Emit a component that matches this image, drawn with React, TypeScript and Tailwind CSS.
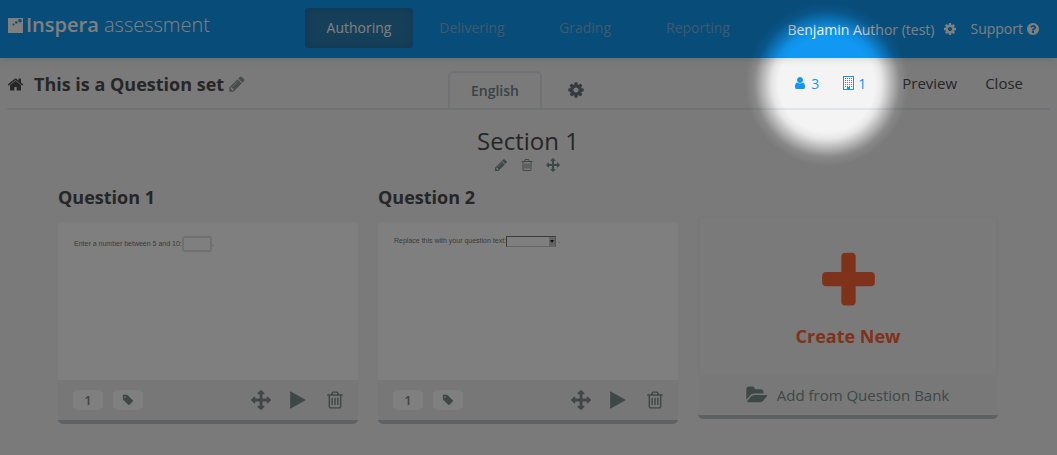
import type { ReactNode } from "react";

const paths = {
  plus: "M1600 736v192q0 40-28 68t-68 28h-416v416q0 40-28 68t-68 28h-192q-40 0-68-28t-28-68v-416h-416q-40 0-68-28t-28-68v-192q0-40 28-68t68-28h416v-416q0-40 28-68t68-28h192q40 0 68 28t28 68v416h416q40 0 68 28t28 68z",
  user: "M1536 1399q0 109-62.5 187t-150.5 78h-854q-88 0-150.5-78t-62.5-187q0-85 8.5-160.5t31.5-152 58.5-131 94-89 134.5-34.5q131 128 313 128t313-128q76 0 134.5 34.5t94 89 58.5 131 31.5 152 8.5 160.5zm-256-887q0 159-112.5 271.5t-271.5 112.5-271.5-112.5-112.5-271.5 112.5-271.5 271.5-112.5 271.5 112.5 112.5 271.5z",
  cog: "M1152 896q0-106-75-181t-181-75-181 75-75 181 75 181 181 75 181-75 75-181zm512-109v222q0 12-8 23t-20 13l-185 28q-19 54-39 91 35 50 107 138 10 12 10 25t-9 23q-27 37-99 108t-94 71q-12 0-26-9l-138-108q-44 23-91 38-16 136-29 186-7 28-36 28h-222q-14 0-24.5-8.5t-11.5-21.5l-28-184q-49-16-90-37l-141 107q-10 9-25 9-14 0-25-11-126-114-165-168-7-10-7-23 0-12 8-23 15-21 51-66.5t54-70.5q-27-50-41-99l-183-27q-13-2-21-12.5t-8-23.5v-222q0-12 8-23t19-13l186-28q14-46 39-92-40-57-107-138-10-12-10-24 0-10 9-23 26-36 98.5-107.5t94.5-71.5q13 0 26 10l138 107q44-23 91-38 16-136 29-186 7-28 36-28h222q14 0 24.5 8.5t11.5 21.5l28 184q49 16 90 37l142-107q9-9 24-9 13 0 25 10 129 119 165 170 7 8 7 22 0 12-8 23-15 21-51 66.5t-54 70.5q26 50 41 98l183 28q13 2 21 12.5t8 23.5z",
  pencil: "M491 1536l91-91-235-235-91 91v107h128v128h107zm523-928q0-22-22-22-10 0-17 7l-542 542q-7 7-7 17 0 22 22 22 10 0 17-7l542-542q7-7 7-17zm-54-192l416 416-832 832h-416v-416zm683 96q0 53-37 90l-166 166-416-416 166-165q36-38 90-38 53 0 91 38l235 234q37 39 37 91z",
  trash: "M704 736v576q0 14-9 23t-23 9h-64q-14 0-23-9t-9-23v-576q0-14 9-23t23-9h64q14 0 23 9t9 23zm256 0v576q0 14-9 23t-23 9h-64q-14 0-23-9t-9-23v-576q0-14 9-23t23-9h64q14 0 23 9t9 23zm256 0v576q0 14-9 23t-23 9h-64q-14 0-23-9t-9-23v-576q0-14 9-23t23-9h64q14 0 23 9t9 23zm128 724v-948h-896v948q0 22 7 40.5t14.5 27 10.5 8.5h832q3 0 10.5-8.5t14.5-27 7-40.5zm-672-1076h448l-48-117q-7-9-17-11h-317q-10 2-17 11zm928 32v64q0 14-9 23t-23 9h-96v948q0 83-47 143.5t-113 60.5h-832q-66 0-113-58.5t-47-141.5v-952h-96q-14 0-23-9t-9-23v-64q0-14 9-23t23-9h309l70-167q15-37 54-63t79-26h320q40 0 79 26t54 63l70 167h309q14 0 23 9t9 23z",
  arrows: "M1792 896q0 26-19 45l-256 256q-19 19-45 19t-45-19-19-45v-128h-384v384h128q26 0 45 19t19 45-19 45l-256 256q-19 19-45 19t-45-19l-256-256q-19-19-19-45t19-45 45-19h128v-384h-384v128q0 26-19 45t-45 19-45-19l-256-256q-19-19-19-45t19-45l256-256q19-19 45-19t45 19 19 45v128h384v-384h-128q-26 0-45-19t-19-45 19-45l256-256q19-19 45-19t45 19l256 256q19 19 19 45t-19 45-45 19h-128v384h384v-128q0-26 19-45t45-19 45 19l256 256q19 19 19 45z",
  home: "M1472 992v480q0 26-19 45t-45 19h-384v-384h-256v384h-384q-26 0-45-19t-19-45v-480q0-1 .5-3t.5-3l575-474 575 474q1 2 1 6zm223-69l-62 74q-8 9-21 11h-3q-13 0-21-7l-692-577-692 577q-12 8-24 7-13-2-21-11l-62-74q-8-10-7-23.5t11-21.5l719-599q32-26 76-26t76 26l244 204v-195q0-14 9-23t23-9h192q14 0 23 9t9 23v408l219 182q10 8 11 21.5t-7 23.5z",
  play: "M1576 927l-1328 738q-23 13-39.5 3t-16.5-36v-1472q0-26 16.5-36t39.5 3l1328 738q23 13 23 31t-23 31z",
  tag: "M576 448q0-53-37.500-90.500t-90.500-37.500-90.500 37.500-37.500 90.500 37.500 90.500 90.500 37.500 90.500-37.500 37.500-90.500zm1067 576q0 53-37 90l-491 492q-39 37-91 37-53 0-90-37l-715-716q-38-37-64.500-101t-26.500-117v-416q0-52 38-90t90-38h416q53 0 117 26.500t102 64.500l715 714q37 39 37 91z",
  folder: "M1815 952q0 31-31 66l-336 396q-43 51-120.5 86.5t-143.5 35.5h-1088q-34 0-60.5-13t-26.5-43q0-31 31-66l336-396q43-51 120.5-86.5t143.5-35.5h1088q34 0 60.5 13t26.5 43zm-343-344v160h-832q-94 0-197 47.5t-164 119.5l-337 396-5 6q0-4-.5-12.5t-.5-12.5v-960q0-92 66-158t158-66h320q92 0 158 66t66 158v32h544q92 0 158 66t66 158z",
  help: "M1024 1376v-192q0-14-9-23t-23-9h-192q-14 0-23 9t-9 23v192q0 14 9 23t23 9h192q14 0 23-9t9-23zm256-672q0-88-55.5-163t-138.5-116-170-41q-243 0-371 213-15 24 8 42l132 100q7 6 19 6 16 0 25-12 53-68 86-92 34-24 86-24 48 0 85.5 26t37.5 59q0 38-20 61t-68 45q-63 28-115.5 86.5t-52.5 125.5v36q0 14 9 23t23 9h192q14 0 23-9t9-23q0-19 21.5-49.5t54.5-49.5q32-18 49-28.5t46-35 44.5-48 28-60.5 12.5-81zm384 192q0 209-103 385.5t-279.5 279.5-385.5 103-385.5-103-279.5-279.5-103-385.5 103-385.5 279.5-279.5 385.5-103 385.5 103 279.5 279.5 103 385.5z",
};

function Icon({ name, className }: { name: keyof typeof paths; className: string }) {
  return (
    <svg aria-hidden="true" viewBox="0 0 1792 1792" fill="currentColor" className={`shrink-0 overflow-visible ${className}`}>
      <path d={paths[name]} />
    </svg>
  );
}

function BuildingIcon() {
  const windows = [2, 4, 6, 8, 10].flatMap((y) => [2, 4, 6, 8].map((x) => [x, y]));
  return (
    <svg aria-hidden="true" viewBox="0 0 11 14" fill="currentColor" shapeRendering="crispEdges" className="h-[14px] w-[11px] shrink-0">
      <path fillRule="evenodd" d="M0 0h11v14H0zM1 1v12h9V1z" />
      {windows.map(([x, y]) => (
        <rect key={`${x}-${y}`} x={x} y={y} width="1" height="1" />
      ))}
      <path d="M4 11h3v2H4z" />
    </svg>
  );
}

function Logo() {
  return (
    <a href="#home" className="flex items-center gap-[3px] text-white">
      <svg aria-hidden="true" viewBox="0 0 15 15" className="size-[15px]">
        <path fill="currentColor" d="M0 0h15v15H0z" />
        <g fill="#1098f2">
          <circle cx="5.500" cy="6.500" r="1" />
          <circle cx="8.300" cy="4.500" r="1.200" />
          <circle cx="12" cy="2.700" r="1.800" />
        </g>
      </svg>
      <span className="text-[20px] leading-7 whitespace-nowrap">
        <span className="font-semibold">Inspera</span> <span className="font-light">assessment</span>
      </span>
    </a>
  );
}

function QuestionCard({ title, children }: { title: string; children: ReactNode }) {
  return (
    <article>
      <h3 className="mb-[13px] text-[18px] leading-6 font-bold text-[#4d4d4d]">{title}</h3>
      <div className="overflow-hidden rounded-[5px] border-b-4 border-[#bcc2c6]">
        <div className="h-[158px] bg-white px-4 pt-[14px] font-['Liberation_Sans',sans-serif] text-[7px] text-[#777]">{children}</div>
        <div className="flex h-10 items-center bg-[#eeeeee] pr-[13px] pl-[15px] text-[#7c908e]">
          <button className="h-5 w-[30px] rounded-[5px] bg-white text-[13px] leading-5 font-semibold">1</button>
          <button aria-label="Tags" className="ml-2.5 flex h-5 w-[30px] items-center justify-center rounded-[5px] bg-white">
            <Icon name="tag" className="size-3" />
          </button>
          <div className="ml-auto flex items-center gap-[17px]">
            <button aria-label="Move question"><Icon name="arrows" className="size-5" /></button>
            <button aria-label="Play question"><Icon name="play" className="size-5" /></button>
            <button aria-label="Delete question"><Icon name="trash" className="size-5" /></button>
          </div>
        </div>
      </div>
    </article>
  );
}

export default function App() {
  return (
    <div className="relative min-h-screen overflow-hidden bg-[#f4f4f4] font-['Open_Sans',sans-serif] text-[15px] text-[#4d4d4d]">
      <header className="grid h-[58px] grid-cols-[1fr_auto_1fr] items-start bg-[#1098f2] px-2 shadow-[0_1px_8px_rgba(0,0,0,0.12)]">
        <div className="pt-[11px]"><Logo /></div>
        <nav aria-label="Main" className="flex gap-[5px] pt-2 text-[14px]">
          <a href="#authoring" className="w-[108px] rounded-[4px] bg-[#2c7fb3] text-center leading-10 text-white shadow-[inset_0_0_10px_#1c6fa5]">Authoring</a>
          <a href="#delivering" className="w-[108px] text-center leading-10 text-[#7cb4dc]">Delivering</a>
          <a href="#grading" className="w-[108px] text-center leading-10 text-[#7cb4dc]">Grading</a>
          <a href="#reporting" className="w-[108px] text-center leading-10 text-[#7cb4dc]">Reporting</a>
        </nav>
        <div className="flex items-center justify-end pt-[18px] pr-[9px] text-[14px] leading-5 whitespace-nowrap text-white">
          <a href="#profile" className="pt-0.5">Benjamin Author (test)</a>
          <button aria-label="Settings" className="mr-[13px] ml-[9px]"><Icon name="cog" className="size-[14px]" /></button>
          <a href="#support" className="flex items-center gap-[3px]">Support <Icon name="help" className="size-[14px]" /></a>
        </div>
      </header>

      <div className="mx-[7px] grid h-[52px] grid-cols-[1fr_auto_1fr] border-b-2 border-[#e0e5ea]">
        <div className="flex items-center pt-0.5">
          <a href="#home" aria-label="Home"><Icon name="home" className="size-[17px]" /></a>
          <h1 className="ml-2.5 text-[18px] leading-6 font-bold whitespace-nowrap">This is a Question set</h1>
          <button aria-label="Rename" className="ml-1 text-[#8f9b9b]"><Icon name="pencil" className="size-[18px]" /></button>
        </div>
        <div className="flex items-end">
          <button className="h-[37px] w-[94px] rounded-t-[6px] border-2 border-b-0 border-[#e0e5ea] text-[14px] font-semibold text-[#78828c]">English</button>
          <button aria-label="Set options" className="flex h-9 w-[67px] items-center justify-center text-[#6b7680]"><Icon name="cog" className="size-[18px]" /></button>
        </div>
        <div className="flex items-center justify-end pr-[27px] whitespace-nowrap">
          <a href="#people" className="mr-6 flex items-center gap-1 text-[14px] text-[#1098f2]"><Icon name="user" className="size-[14px]" />3</a>
          <a href="#organisations" className="mr-9 flex items-center gap-1 text-[14px] text-[#1098f2]"><BuildingIcon />1</a>
          <button className="mr-7">Preview</button>
          <button>Close</button>
        </div>
      </div>

      <div className="pr-px">
        <main className="mx-auto max-w-[980px] px-5 pt-[15px]">
          <h2 className="text-center text-[24px] leading-8">Section 1</h2>
          <div className="mb-3 flex h-4 items-center justify-center gap-3 pr-[3px] text-[#7c908e]">
            <button aria-label="Edit section"><Icon name="pencil" className="size-[14px]" /></button>
            <button aria-label="Delete section"><Icon name="trash" className="size-[14px]" /></button>
            <button aria-label="Move section"><Icon name="arrows" className="size-[14px]" /></button>
          </div>
          <div className="grid grid-cols-3 gap-5">
            <QuestionCard title="Question 1">
              <label className="flex items-center whitespace-nowrap">
                Enter a number between 5 and 10:
                <input type="text" className="h-4 w-[30px] rounded-[3px] border-2 border-[#e0e0e0]" />
                .
              </label>
            </QuestionCard>
            <QuestionCard title="Question 2">
              <label className="flex items-center whitespace-nowrap">
                Replace this with your question text:
                <span className="relative mr-0.5 flex">
                  <select className="h-[11px] w-[50px] appearance-none border border-t-[#777] border-r-[#aaa] border-b-[#ccc] border-l-[#777]" />
                  <span className="pointer-events-none absolute inset-y-px right-px flex w-1.5 items-center justify-center bg-[#c8c8c8]">
                    <svg aria-hidden="true" viewBox="0 0 4 3" className="h-[3px] w-1"><path fill="#222" d="M0 0h4L2 3z" /></svg>
                  </span>
                </span>
                .
              </label>
            </QuestionCard>
            <div className="mt-[31px] self-start overflow-hidden rounded-[5px] border-b-4 border-[#bcc2c6]">
              <button className="flex h-[159px] w-full flex-col items-center border-2 border-b-0 border-[#f0f0f0] pt-[30px] text-[18px] leading-6 font-bold text-[#ff6535]">
                <Icon name="plus" className="size-[67px]" />
                <span className="mt-[9px]">Create New</span>
              </button>
              <button className="flex h-10 w-full items-center justify-center gap-2.5 bg-[#f0f0f0] text-[#7c908e]">
                <Icon name="folder" className="size-5" />
                Add from Question Bank
              </button>
            </div>
          </div>
        </main>
      </div>

      <div
        aria-hidden="true"
        className="pointer-events-none absolute inset-0 bg-[radial-gradient(circle_at_calc(100%_-_230px)_84px,rgba(0,0,0,0)_48px,rgba(0,0,0,0.06)_55px,rgba(0,0,0,0.25)_64px,rgba(0,0,0,0.44)_73px,rgba(0,0,0,0.5)_82px)]"
      />
    </div>
  );
}
